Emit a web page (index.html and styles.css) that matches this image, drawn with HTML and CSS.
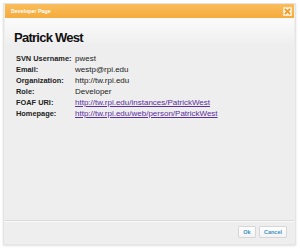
FILE: index.html
```html
<!DOCTYPE html>
<html lang="en">
<head>
  <meta charset="UTF-8">
  <title>Developer Page</title>
  <link rel="stylesheet" href="styles.css">
</head>
<body>
  <div class="dialog">
    <div class="titlebar">
      <span class="title">Developer Page</span>
      <span class="close">
        <svg viewBox="0 0 10 10" width="7" height="7">
          <path d="M2 2 L8 8 M8 2 L2 8" stroke="#f29a1f" stroke-width="2.4" stroke-linecap="square"/>
        </svg>
      </span>
    </div>
    <div class="content">
      <h1>Patrick West</h1>
      <div class="info">
        <span class="label">SVN Username:</span><span>pwest</span>
        <span class="label">Email:</span><span>westp@rpi.edu</span>
        <span class="label">Organization:</span><span>http://tw.rpi.edu</span>
        <span class="label">Role:</span><span>Developer</span>
        <span class="label">FOAF URI:</span><a href="#">http://tw.rpi.edu/instances/PatrickWest</a>
        <span class="label">Homepage:</span><a href="#">http://tw.rpi.edu/web/person/PatrickWest</a>
      </div>
    </div>
    <div class="footer">
      <button class="btn">Ok</button>
      <button class="btn">Cancel</button>
    </div>
  </div>
</body>
</html>
```

FILE: styles.css
```css
* {
  margin: 0;
  padding: 0;
  box-sizing: border-box;
  font-family: "Liberation Sans", Arial, sans-serif;
}

body {
  background-color: #ffffff;
  width: 300px;
  height: 250px;
}

.dialog {
  margin: 3px 0 0 3px;
  width: 293px;
  height: 242px;
  padding: 0 1px 1px 1px;
  border: 1px solid #e4e4e4;
  background-color: #eeeeee;
  box-shadow: 0 1px 2px rgba(0, 0, 0, 0.12);
  display: flex;
  flex-direction: column;
}

.titlebar {
  height: 14px;
  background: linear-gradient(#f9bd5c, #f5ab3c);
  display: flex;
  align-items: center;
  justify-content: space-between;
  padding: 0 2px 0 6px;
}

.title {
  color: #ffffff;
  font-size: 5.3px;
  font-weight: bold;
}

.close {
  width: 9px;
  height: 9px;
  background-color: #fdf6ea;
  border: 1px solid #fbe3bd;
  display: flex;
  align-items: center;
  justify-content: center;
}

.content {
  flex: 1;
  padding: 12px 0 0 9px;
  background: linear-gradient(#fbfbfb, #eeeeee 28px);
  border-bottom: 1px solid #dadada;
}

h1 {
  font-size: 13px;
  line-height: 16px;
  letter-spacing: -0.75px;
  font-weight: bold;
  color: #111111;
  margin-bottom: 7px;
}

.info {
  display: grid;
  grid-template-columns: 59px auto;
  padding-left: 2px;
  font-size: 8px;
  line-height: 11px;
  color: #222222;
}

.label {
  font-size: 7.4px;
  font-weight: bold;
  white-space: nowrap;
}

.info a {
  color: #5b2fa0;
  text-decoration: underline;
}

.footer {
  height: 22px;
  border-top: 1px solid #fafafa;
  display: flex;
  justify-content: flex-end;
  align-items: flex-start;
  gap: 3px;
  padding: 4px 7px 0 0;
}

.btn {
  height: 12px;
  padding: 0 4px;
  background: linear-gradient(#ffffff, #f3f3f3);
  border: 1px solid #d6d6d6;
  border-radius: 1px;
  color: #3c90c4;
  font-size: 5.5px;
  font-weight: bold;
}

.btn:first-child {
  width: 18px;
}
```
